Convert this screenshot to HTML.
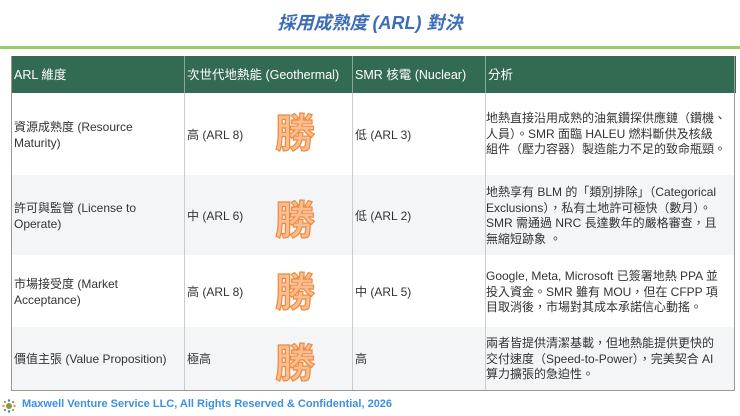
<!DOCTYPE html>
<html><head><meta charset="utf-8"><style>
body{margin:0;width:740px;height:416px;background:#fff;position:relative;overflow:hidden;font-family:"Liberation Sans","Noto Sans CJK TC",sans-serif;color:#333;}
.t{position:absolute;left:0;width:740px;top:9px;text-align:center;font-size:18px;font-weight:bold;font-style:italic;color:#3c6db5;}
.gl{position:absolute;left:0;top:46px;width:740px;height:3px;background:#9acd6a;}
.tbl{position:absolute;left:11px;top:56px;width:724px;height:335px;border:1px solid #999;border-top:none;box-sizing:border-box;}
.hd{position:absolute;left:11px;top:56px;width:725px;height:37px;background:#336b52;}
.row{position:absolute;left:12px;width:723px;border-bottom:1px solid #ddd;}
.vl{position:absolute;top:56px;width:1px;height:335px;background:#ccc;}
.c{position:absolute;font-size:12px;line-height:15.5px;}
.h{color:#fff;font-size:12.5px;top:68px;}
.w{position:absolute;font-size:40px;font-weight:bold;color:#fbbd90;-webkit-text-stroke:1.2px #ee8a3d;font-family:"Noto Sans CJK TC",sans-serif;line-height:40px;left:275px;}
.f{position:absolute;left:22px;top:398px;font-size:11px;font-weight:bold;color:#3d8fe0;}
</style></head><body>
<div class="t">採用成熟度 (ARL) 對決</div>
<div class="gl"></div>
<div class="row" style="top:93px;height:82px;background:#fff"></div>
<div class="row" style="top:175px;height:80px;background:#f4f5f7"></div>
<div class="row" style="top:255px;height:72px;background:#fff"></div>
<div class="row" style="top:327px;height:64px;background:#f4f5f7;border-bottom:none"></div>
<div class="hd"></div>
<div class="vl" style="left:184px;background:#8aa898"></div><div class="vl" style="left:352px;background:#8aa898"></div><div class="vl" style="left:485px;background:#8aa898"></div>
<div class="vl" style="left:184px;top:93px;height:298px"></div><div class="vl" style="left:352px;top:93px;height:298px"></div><div class="vl" style="left:485px;top:93px;height:298px"></div>
<div class="tbl"></div>
<div class="c h" style="left:14px">ARL 維度</div>
<div class="c h" style="left:187px">次世代地熱能 (Geothermal)</div>
<div class="c h" style="left:355px">SMR 核電 (Nuclear)</div>
<div class="c h" style="left:488px">分析</div>

<div class="c" style="left:14px;top:120px">資源成熟度 (Resource<br>Maturity)</div>
<div class="c" style="left:187px;top:128px">高 (ARL 8)</div>
<div class="w" style="top:110px">勝</div>
<div class="c" style="left:355px;top:128px">低 (ARL 3)</div>
<div class="c" style="left:486px;top:111px;white-space:nowrap">地熱直接沿用成熟的油氣鑽探供應鏈（鑽機、<br>人員）。SMR 面臨 HALEU 燃料斷供及核級<br>組件（壓力容器）製造能力不足的致命瓶頸。</div>

<div class="c" style="left:14px;top:201px">許可與監管 (License to<br>Operate)</div>
<div class="c" style="left:187px;top:209px">中 (ARL 6)</div>
<div class="w" style="top:197px">勝</div>
<div class="c" style="left:355px;top:209px">低 (ARL 2)</div>
<div class="c" style="left:486px;top:185px;white-space:nowrap">地熱享有 BLM 的「類別排除」（Categorical<br>Exclusions），私有土地許可極快（數月）。<br>SMR 需通過 NRC 長達數年的嚴格審查，且<br>無縮短跡象 。</div>

<div class="c" style="left:14px;top:277px">市場接受度 (Market<br>Acceptance)</div>
<div class="c" style="left:187px;top:285px">高 (ARL 8)</div>
<div class="w" style="top:269px">勝</div>
<div class="c" style="left:355px;top:285px">中 (ARL 5)</div>
<div class="c" style="left:486px;top:269px;white-space:nowrap">Google, Meta, Microsoft 已簽署地熱 PPA 並<br>投入資金。SMR 雖有 MOU，但在 CFPP 項<br>目取消後，市場對其成本承諾信心動搖。</div>

<div class="c" style="left:14px;top:352px">價值主張 (Value Proposition)</div>
<div class="c" style="left:187px;top:352px">極高</div>
<div class="w" style="top:340px">勝</div>
<div class="c" style="left:355px;top:352px">高</div>
<div class="c" style="left:486px;top:336px;white-space:nowrap">兩者皆提供清潔基載，但地熱能提供更快的<br>交付速度（Speed-to-Power），完美契合 AI<br>算力擴張的急迫性。</div>

<svg style="position:absolute;left:2px;top:399px" width="14" height="14" viewBox="0 0 14 14"><circle cx="7" cy="7" r="3" fill="#8a9a3a"/><circle cx="7" cy="1.5" r="1.2" fill="#3a7fc0"/><circle cx="7" cy="12.5" r="1.2" fill="#3a7fc0"/><circle cx="1.5" cy="7" r="1.2" fill="#d0a030"/><circle cx="12.5" cy="7" r="1.2" fill="#d0a030"/><circle cx="3" cy="3" r="1" fill="#5a9a4a"/><circle cx="11" cy="11" r="1" fill="#5a9a4a"/><circle cx="11" cy="3" r="1" fill="#c05050"/><circle cx="3" cy="11" r="1" fill="#c05050"/></svg>
<div class="f">Maxwell Venture Service LLC, All Rights Reserved &amp; Confidential, 2026</div>
</body></html>
